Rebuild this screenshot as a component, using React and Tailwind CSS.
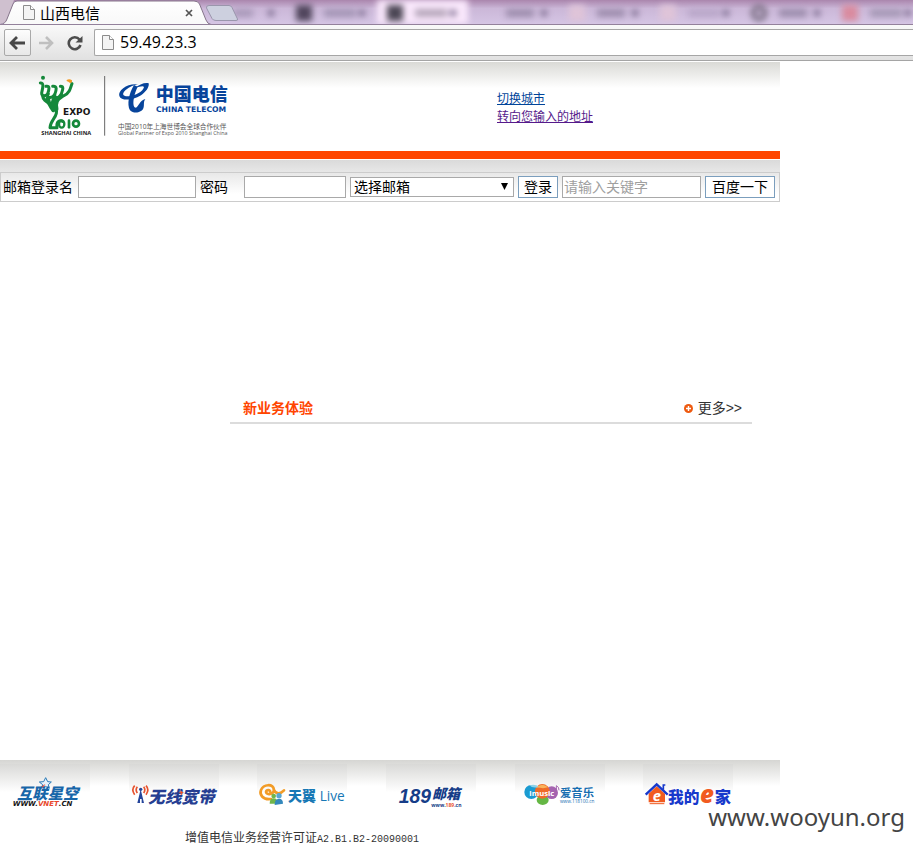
import React from "react";

const cjk = "font-['Liberation_Sans','Noto_Sans_CJK_SC',sans-serif]";
const ui = "font-['Open_Sans','Noto_Sans_CJK_SC',sans-serif]";
const wide = "font-['DejaVu_Sans',sans-serif]";

function PageIcon() {
  return (
    <svg width="12" height="15" viewBox="0 0 12 15" className="shrink-0" aria-hidden="true">
      <path d="M.5 .5H7.500L11.500 4.500V14.500H.5Z" fill="#f4f4f4" stroke="#8c8c8c" />
      <path d="M7.500 .5V4.500H11.500" fill="#fff" stroke="#8c8c8c" />
    </svg>
  );
}

const backgroundTabs = [
  { icon: "bg-transparent", text: "w-5 bg-[#a898b8]", tab: "" },
  { icon: "bg-[#50455c]", text: "w-8 bg-[#a294b4]", tab: "" },
  { icon: "bg-[#4b4654]", text: "w-8 bg-[#b5a6ba]", tab: "bg-[#fae8fc]" },
  { icon: "bg-transparent", text: "w-7 bg-[#9c8cac]", tab: "" },
  { icon: "bg-[#dfc4d8]", text: "w-7 bg-[#9c8cac]", tab: "" },
  { icon: "bg-[#dfc4d8]", text: "w-8 bg-[#b8a6c8]", tab: "" },
  { icon: "rounded-full border-4 border-[#6a5f72]", text: "w-7 bg-[#9a8bab]", tab: "" },
  { icon: "bg-[#d98b9f]", text: "w-8 bg-[#a497b4]", tab: "" },
];

function TabStrip() {
  return (
    <div className="relative flex h-[25px] overflow-hidden border-b border-[#93819b] bg-gradient-to-b from-[#aa86ad] via-[#cbb7d8] via-35% to-[#d5c5e4]">
      <div className="relative z-10 flex h-[25px] w-[195px] shrink-0 items-center">
        <svg className="absolute left-0 top-0" width="242" height="25" viewBox="0 0 242 25" aria-hidden="true">
          <defs>
            <linearGradient id="tab" x1="0" y1="0" x2="0" y2="1">
              <stop offset="0" stopColor="#fff" />
              <stop offset="1" stopColor="#f8f8f8" />
            </linearGradient>
          </defs>
          <path d="M0 0H14L6 22L0 24Z" fill="#cfc0cf" />
          <path d="M0 24.500C4 24 6 22 7 19L13 4Q14 1 17 1H194Q198 1 199.500 4L206 20Q207.500 24 211 24.500V26H0Z" fill="url(#tab)" stroke="#85758a" />
          <path d="M209 5.500H229Q231 5.500 232 7.500L237.500 19Q238 20.500 236 20.500H216Q213 20.500 212 18.500L206.500 8Q206 5.500 209 5.500Z" fill="#cdd0df" stroke="#9a96ac" />
        </svg>
        <div className="relative flex w-full items-center pl-[23px]">
          <PageIcon />
          <span className={"ml-[5px] flex-1 text-[15px] leading-6 text-black " + ui}>山西电信</span>
          <button aria-label="关闭标签" className="flex size-3 items-center justify-center">
            <svg width="8" height="8" viewBox="0 0 8 8" aria-hidden="true">
              <path d="M1 1L7 7M7 1L1 7" stroke="#555" strokeWidth="1.700" />
            </svg>
          </button>
        </div>
      </div>
      <div className="flex min-w-0 flex-1 overflow-hidden" aria-hidden="true">
        {backgroundTabs.map((t, i) => (
          <div key={i} className={"flex w-[91px] shrink-0 items-center pl-[10px] pt-0.5 blur-[3px] " + t.tab}>
            <span className={"size-4 shrink-0 " + t.icon} />
            <span className={"ml-3 h-2 " + t.text} />
            <span className="ml-auto mr-3 size-[6px] bg-[#77688a]" />
          </div>
        ))}
      </div>
    </div>
  );
}

function Toolbar() {
  return (
    <div className="flex h-9 items-center border-b border-[#a5a5a5] bg-gradient-to-b from-[#f9f9f9] to-[#e1e1e1] pl-1">
      <button aria-label="后退" className="flex size-[27px] items-center justify-center rounded-xs border border-[#a9a9a9] bg-gradient-to-b from-[#fdfdfd] to-[#e8e8e8]">
        <svg width="17" height="14" viewBox="0 0 17 14" aria-hidden="true">
          <path d="M8 1L2 7L8 13M2 7H16" fill="none" stroke="#484848" strokeWidth="2.800" />
        </svg>
      </button>
      <button aria-label="前进" className="ml-[7px] flex h-6 w-4 items-center justify-center">
        <svg width="16" height="14" viewBox="0 0 16 14" aria-hidden="true">
          <path d="M8 1L14 7L8 13M14 7H1" fill="none" stroke="#bfbfbf" strokeWidth="2.600" />
        </svg>
      </button>
      <button aria-label="重新加载" className="ml-[13px] flex size-4 items-center justify-center">
        <svg width="16" height="16" viewBox="0 0 16 16" aria-hidden="true">
          <path d="M12.500 4.500A6 6 0 1 0 13.500 10" fill="none" stroke="#4c4c4c" strokeWidth="2.600" />
          <path d="M15.500 1V7.500H8.500Z" fill="#4c4c4c" />
        </svg>
      </button>
      <label className="ml-[11px] flex h-[27px] flex-1 items-center rounded-l-xs border border-r-0 border-[#a6a6a6] bg-white pl-[7px]">
        <PageIcon />
        <input aria-label="地址" defaultValue="59.49.23.3" className="ml-[6px] h-[25px] min-w-0 flex-1 bg-transparent pb-0.5 font-['Open_Sans',sans-serif] text-base leading-[22px] text-black outline-none" />
      </label>
    </div>
  );
}

function Brand() {
  return (
    <svg width="260" height="88" viewBox="0 6 780 264" className={"shrink-0 " + ui} role="img" aria-label="中国电信">
      <g fill="none" stroke="#15883a" strokeLinecap="round" strokeLinejoin="round">
        <path d="M121 69C134 68 127 87 125 99C124 109 136 109 145 102" strokeWidth="9" />
        <path d="M138 79C151 76 147 90 143 101C140 116 155 116 164 104" strokeWidth="9" />
        <path d="M158 79C173 77 169 91 164 104C162 118 174 116 183 104" strokeWidth="9" />
        <path d="M181 79C194 79 187 92 183 104C181 114 201 105 207 94C212 86 213 78 216 71" strokeWidth="9" />
        <path d="M127 105C129 120 139 125 150 132C160 140 172 146 169 160C166 175 151 184 150 203H171C168 183 180 180 188 184" strokeWidth="9" />
        <path d="M143 115C145 134 155 140 160 150M165 112C157 124 157 134 161 146M184 110C168 118 165 132 169 147" strokeWidth="13" />
        <ellipse cx="185" cy="192" rx="8" ry="11" strokeWidth="7" />
        <path d="M207 182V202" strokeWidth="8" />
        <ellipse cx="228" cy="191" rx="9" ry="9" strokeWidth="8" />
      </g>
      <circle cx="129" cy="53" r="6" fill="#15883a" />
      <path d="M200 60Q208 55 216 61Q217 70 210 69Q205 64 200 63Z" fill="#f29a25" />
      <text x="189" y="165" fontSize="27" fontWeight="700" fill="#171717" className={wide}>EXPO</text>
      <text x="124" y="226" fontSize="17" fontWeight="700" fill="#171717">SHANGHAI CHINA</text>
      <path d="M314 48V227" stroke="#666" strokeWidth="3" />
      <g fill="#07449b">
        <path d="M414 73C382 69 353 91 358 108C364 126 407 120 428 102C442 91 448 78 446 70C434 67 417 74 405 84C420 80 429 77 432 81C430 94 406 107 386 109C367 110 365 101 377 90C389 79 403 76 414 73Z" />
        <path d="M402 75C387 99 380 134 390 151C401 163 426 158 430 145C434 136 429 126 436 117C419 121 416 140 408 143C395 143 400 106 413 80Z" />
      </g>
      <text x="467" y="124" fontSize="54" fontWeight="900" fill="#07449b">中国电信</text>
      <text x="468" y="157" fontSize="23" fontWeight="700" fill="#07449b" className={wide}>CHINA TELECOM</text>
      <text x="354" y="206" fontSize="20" fill="#555">中国2010年上海世博会全球合作伙伴</text>
      <text x="354" y="224" fontSize="16" fill="#555">Global Partner of Expo 2010 Shanghai China</text>
    </svg>
  );
}

function Vnet() {
  return (
    <>
      <path d="M137 41L143 53L154 54L145 62L148 73L136 67L125 73L128 62L118 54L131 53Z" fill="#e8f3fb" stroke="#287ab8" strokeWidth="3" />
      <path d="M122 69L136 60L130 71Z" fill="#ef5030" />
      <text x="51" y="104" fontSize="46" fontWeight="900" fontStyle="italic" fill="#1766a9">互联星空</text>
      <text x="38" y="127" fontSize="21" fontWeight="700" fontStyle="italic" fill="#171717" className={wide}>WWW.<tspan fill="#e8472c">VNET</tspan>.CN</text>
    </>
  );
}

function Broadband() {
  return (
    <>
      <path d="M35 76L25 117H33V105H38V117H45Z" fill="#25459b" />
      <circle cx="35" cy="76" r="5" fill="#25459b" />
      <path d="M25 68Q18 77 25 87M17 65Q6 77 17 92M44 68Q51 77 44 87M51 65Q62 77 51 92" fill="none" stroke="#e6532f" strokeWidth="5" />
      <text x="57" y="117" fontSize="50" fontWeight="900" fontStyle="italic" fill="#263e92">无线宽带</text>
      <path d="M157 81V92M151 86H163" stroke="#e6532f" strokeWidth="4" />
    </>
  );
}

function Live() {
  return (
    <>
      <path d="M42 105C16 108 7 91 12 78C20 59 48 59 51 77C51 91 29 95 27 84C28 76 41 77 40 84M50 77C57 91 70 91 81 79" fill="none" stroke="#f29c27" strokeWidth="8" strokeLinecap="round" />
      <circle cx="50" cy="96" r="7" fill="#71b64b" />
      <path d="M38 119Q38 103 50 103Q62 103 62 119Z" fill="#71b64b" />
      <circle cx="66" cy="95" r="8" fill="#5aa7d1" />
      <path d="M53 123Q53 104 66 104Q78 104 78 119Z" fill="#3388bc" />
      <text x="93" y="112" fontSize="42" fontWeight="900" fill="#1778b5">天翼</text>
      <text x="188" y="112" fontSize="41" fill="#1778b5">Live</text>
    </>
  );
}

function Mail189() {
  return (
    <>
      <text x="38" y="118" fontSize="58" fontWeight="700" fontStyle="italic" fill="#163d88" className="font-['Liberation_Sans',sans-serif]">189</text>
      <text x="138" y="106" fontSize="42" fontWeight="900" fontStyle="italic" fill="#163d88">邮箱</text>
      <text x="136" y="129" fontSize="15" fontWeight="700" fill="#163d88">www.<tspan fill="#e85735">189</tspan>.cn</text>
    </>
  );
}

function Music() {
  return (
    <>
      <circle cx="49" cy="84" r="21" fill="#1b9bd1" />
      <ellipse cx="83" cy="108" rx="18" ry="15" fill="#65b744" />
      <circle cx="110" cy="86" r="19" fill="#a463af" />
      <circle cx="82" cy="82" r="22" fill="#f06b27" />
      <path d="M43 64Q61 59 73 69Q52 74 43 64Z" fill="#8ed3e9" />
      <path d="M65 70Q82 55 99 70Q86 75 65 70Z" fill="#f9b35b" />
      <text x="43" y="96" fontSize="23" fontWeight="700" fill="#fff">imusic</text>
      <path d="M124 83V65Q133 69 132 79" fill="none" stroke="#a463af" strokeWidth="3" />
      <text x="135" y="98" fontSize="34" fontWeight="700" fill="#176eb1">爱音乐</text>
      <text x="135" y="117" fontSize="14" fill="#176eb1">www.118100.cn</text>
    </>
  );
}

function Home() {
  return (
    <>
      <path d="M17 89L41 67L66 89V115H17Z" fill="#f15b20" />
      <path d="M8 92L41 61L74 92" fill="none" stroke="#1739cc" strokeWidth="7" />
      <path d="M61 77V63H67" fill="none" stroke="#1739cc" strokeWidth="5" />
      <text x="29" y="110" fontSize="44" fontWeight="700" fontStyle="italic" fill="#fff">e</text>
      <path d="M20 119H64" stroke="#f15b20" strokeWidth="3" />
      <text x="75" y="116" fontSize="47" fontWeight="800" fill="#1739cc">我的</text>
      <text x="171" y="118" fontSize="72" fontWeight="800" fontStyle="italic" fill="#f15b20">e</text>
      <text x="215" y="116" fontSize="49" fontWeight="800" fill="#1739cc">家</text>
    </>
  );
}

const partners = [
  { name: "互联星空", Mark: Vnet },
  { name: "无线宽带", Mark: Broadband },
  { name: "天翼 Live", Mark: Live },
  { name: "189邮箱", Mark: Mail189 },
  { name: "爱音乐", Mark: Music },
  { name: "我的e家", Mark: Home },
];

export default function App() {
  return (
    <div className={"relative min-h-screen overflow-hidden bg-white text-sm text-black " + cjk}>
      <TabStrip />
      <Toolbar />
      <main className="w-full max-w-[780px] pt-px">
        <header className="flex items-start border-b-8 border-[#ff4500] bg-[linear-gradient(#dadad6,#fff_26px)] pb-px">
          <Brand />
          <nav className="ml-[237px] flex flex-col items-start pt-7 text-xs leading-[18px]">
            <a href="#city" className="text-[#004499] underline">切换城市</a>
            <a href="#go" className="text-[#551a8b] underline">转向您输入的地址</a>
          </nav>
        </header>

        <div className="mt-px bg-[linear-gradient(#dadada,#fff_34px)] pt-3">
          <form className="flex h-[30px] items-center gap-1 border border-[#ccc] px-0.5" onSubmit={(e) => e.preventDefault()}>
            <label htmlFor="user" className="w-[71px] whitespace-nowrap">邮箱登录名</label>
            <input id="user" className="h-[22px] w-[118px] border border-[#a9a9a9] bg-white px-0.5" />
            <label htmlFor="pass" className="w-[40px] whitespace-nowrap">密码</label>
            <input id="pass" type="password" className="h-[22px] w-[102px] border border-[#a9a9a9] bg-white px-0.5" />
            <span className="relative h-5 w-[164px]">
              <select aria-label="选择邮箱" className="block h-5 w-full appearance-none border border-[#a9a9a9] bg-white pl-[3px] leading-[18px]">
                <option>选择邮箱</option>
              </select>
              <svg className="pointer-events-none absolute right-1.5 top-[6px]" width="7" height="7" viewBox="0 0 7 7" aria-hidden="true">
                <path d="M0 0H7L3.500 7Z" fill="#000" />
              </svg>
            </span>
            <button className="h-[22px] w-10 whitespace-nowrap border border-[#7b9ebd] bg-white leading-5">登录</button>
            <input aria-label="关键字" placeholder="请输入关键字" className="h-[22px] w-[139px] border border-[#a9a9a9] bg-white px-px placeholder:text-[#a0a0a0]" />
            <button type="button" className="h-[22px] w-[70px] whitespace-nowrap border border-[#7b9ebd] bg-white leading-5">百度一下</button>
          </form>
        </div>

        <section className="ml-[230px] mr-7 mt-48 flex h-[30px] items-center justify-between border-b-2 border-[#dcdcdc] pl-[13px] pr-[10px]">
          <h2 className="font-bold text-[#ff4500]">新业务体验</h2>
          <a href="#more" className="flex items-center gap-[5px] text-[#333]">
            <svg width="9" height="9" viewBox="0 0 9 9" aria-hidden="true">
              <circle cx="4.500" cy="4.500" r="4.500" fill="#ee5a10" />
              <path d="M4.500 2V7M2 4.500H7" stroke="#fff" strokeWidth="1.400" />
            </svg>
            <span>更多&gt;&gt;</span>
          </a>
        </section>

        <footer className="mt-84">
          <div className="grid grid-cols-6 bg-[linear-gradient(#d6d6d3,#fff_26px)] pr-2 pt-1">
            {partners.map(({ name, Mark }) => (
              <a key={name} href="#partner" aria-label={name} className="block w-[90px] bg-[linear-gradient(#d9d9d7,#fff_28px)]">
                <svg viewBox="0 0 270 138" className={"block h-[46px] w-[90px] " + ui} aria-hidden="true">
                  <Mark />
                </svg>
              </a>
            ))}
          </div>
          <p className="mt-[18px] pl-[185px] text-xs leading-5 text-[#333]">
            增值电信业务经营许可证<span className="font-['Liberation_Mono',monospace] text-[10px]">A2.B1.B2-20090001</span>
          </p>
        </footer>
      </main>
      <div className="pointer-events-none absolute right-2 top-[799px] font-['Noto_Sans',sans-serif] text-2xl leading-9 text-[#444]">www.wooyun.org</div>
    </div>
  );
}
